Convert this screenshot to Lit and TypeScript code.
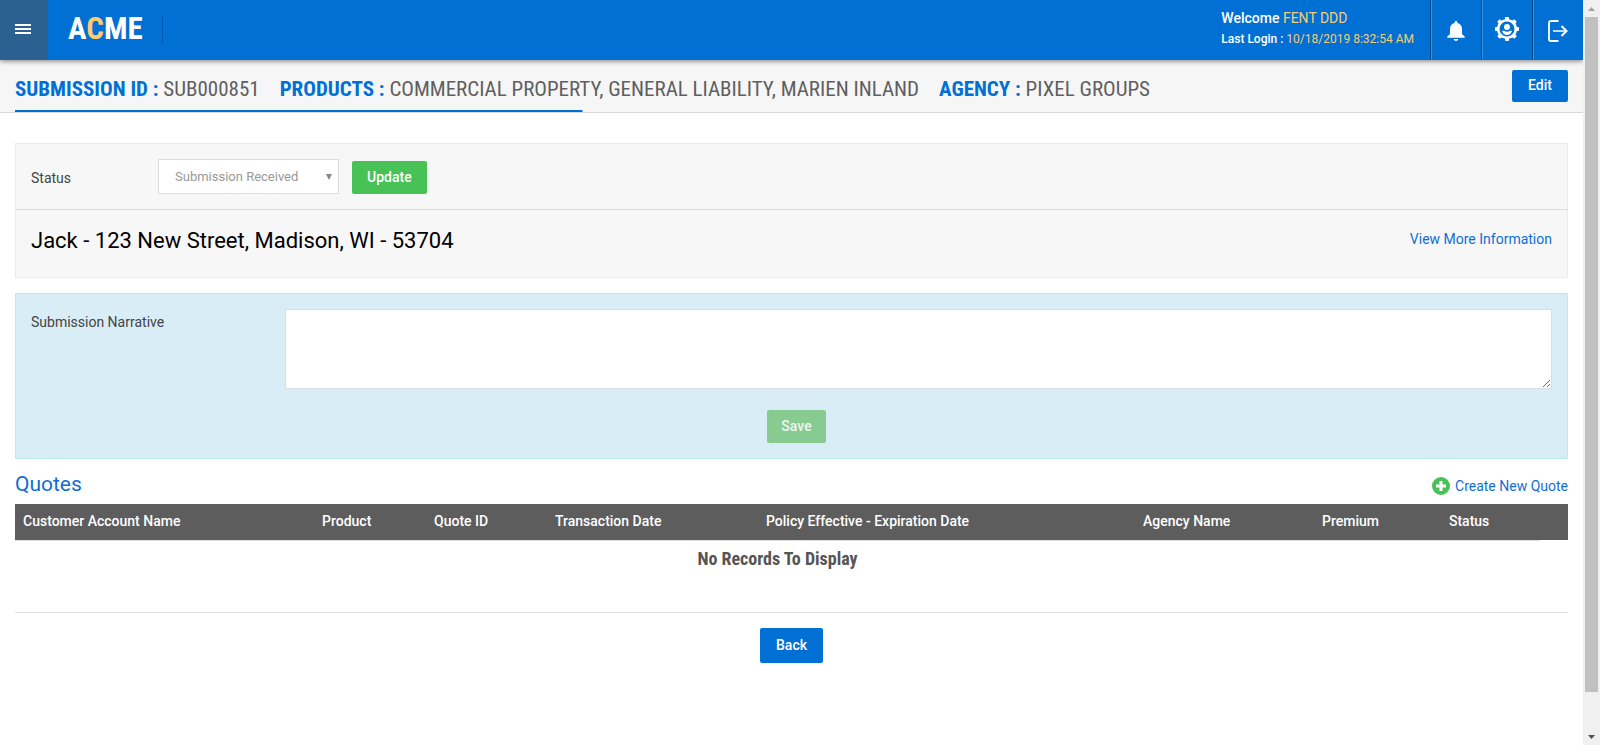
import { LitElement, html, svg, css } from "lit";
import { customElement, property } from "lit/decorators.js";

interface Column {
  label: string;
  share: number;
}

const COLUMNS: Column[] = [
  { label: "Customer Account Name", share: 299 },
  { label: "Product", share: 112 },
  { label: "Quote ID", share: 121 },
  { label: "Transaction Date", share: 211 },
  { label: "Policy Effective - Expiration Date", share: 377 },
  { label: "Agency Name", share: 179 },
  { label: "Premium", share: 127 },
  { label: "Status", share: 99 },
];
const ACTION_SHARE = 28;

const gearTooth = (angle: number) =>
  svg`<path d="M-2.200 -9L-1.800 -12H1.800L2.200 -9z" transform="rotate(${angle})" />`;

@customElement("top-bar")
export class TopBar extends LitElement {
  @property() user = "";
  @property() lastLogin = "";

  static styles = css`
    :host {
      display: block;
      position: relative;
      background: #0070d4;
      color: #fff;
      box-shadow: 0 1px 5px rgba(0, 0, 0, 0.5);
    }
    .bar {
      display: flex;
      height: 60px;
      align-items: flex-start;
    }
    button {
      border: 0;
      padding: 0;
      margin: 0;
      color: inherit;
      background: none;
      display: grid;
      place-items: center;
      cursor: pointer;
    }
    svg {
      display: block;
    }
    .menu {
      width: 48px;
      height: 59px;
      padding: 0 2px 2px 0;
      background: #2a6191;
    }
    .brand {
      font: 700 31px/44px "Roboto Condensed", Roboto, sans-serif;
      color: #fff;
      text-decoration: none;
      margin: 7px 0 0 20px;
      padding: 0 19px 0 0;
    }
    .rule {
      width: 1px;
      height: 28px;
      margin-top: 15px;
      background: #0059a9;
    }
    .accent {
      color: #fdcb6e;
    }
    .who {
      margin-left: auto;
      padding: 8px 16px 0 0;
      font: 500 14px/20px Roboto, sans-serif;
    }
    .login {
      font-size: 12px;
      line-height: 22px;
    }
    .who p {
      margin: 0;
    }
    .who .accent {
      color: #f3cd78;
      font-weight: 400;
    }
    .tool {
      width: 51px;
      height: 59px;
      border-left: 1px solid #0a4780;
      box-shadow: inset 1px 0 #3b8fdc;
      padding-top: 3px;
    }
    .settings {
      padding: 0 0 2px;
    }
  `;

  render() {
    return html`
      <header class="bar">
        <button class="menu" aria-label="Menu">
          <svg width="16" height="10" viewBox="0 0 16 10" fill="#fff">
            <path d="M0 0h16v2H0zM0 4h16v2H0zM0 8h16v2H0z" />
          </svg>
        </button>
        <a class="brand" href="#">A<span class="accent">C</span>ME</a>
        <span class="rule"></span>
        <div class="who">
          <p>Welcome <span class="accent">${this.user}</span></p>
          <p class="login">Last Login : <span class="accent">${this.lastLogin}</span></p>
        </div>
        <button class="tool" aria-label="Notifications">
          <svg width="18" height="20" viewBox="0 0 18 20" fill="#fff">
            <path d="M9 0c.8 0 1.400.6 1.400 1.300v.6C13.200 2.500 15 4.800 15 7.700v5.300l2.600 2.500c.5.6.4 1.200-.4 1.200H.8c-.8 0-.9-.6-.4-1.200L3 13V7.700c0-2.900 1.800-5.200 4.600-5.800v-.6C7.600.6 8.200 0 9 0zM6.600 18h4.800c-.3 1.200-1.200 2-2.400 2s-2.100-.8-2.400-2z" />
          </svg>
        </button>
        <button class="tool settings" aria-label="Account settings">
          <svg width="26" height="26" viewBox="-13 -13 26 26">
            <circle r="8.800" fill="none" stroke="#fff" stroke-width="2.600" />
            <g fill="#fff">
              ${[0, 45, 90, 135, 180, 225, 270, 315].map((a) => gearTooth(a))}
              <circle cy="-2" r="3" />
              <path d="M-5 1.800h2.200C-1.500 3.200 1.500 3.200 2.800 1.800H5C4.400 4.600 2.500 6 0 6s-4.400-1.400-5-4.200z" />
            </g>
          </svg>
        </button>
        <button class="tool" aria-label="Log out">
          <svg width="20" height="22" viewBox="0 0 20 22" fill="none" stroke="#fff" stroke-width="2">
            <path d="M10.500 1H3Q1 1 1 3v16Q1 21 3 21h7.500" stroke-width="1.800" />
            <path d="M5 11h13" stroke-width="1.500" />
            <path d="M13.500 6l5 5-5 5" />
          </svg>
        </button>
      </header>
    `;
  }
}

@customElement("scroll-rail")
export class ScrollRail extends LitElement {
  static styles = css`
    :host {
      display: flex;
      flex-direction: column;
      position: sticky;
      top: 0;
      height: 100vh;
      background: #f0f0f0;
    }
    .arrow {
      height: 17px;
      display: grid;
      place-items: center;
    }
    .track {
      flex: 1;
      padding: 0 2px;
    }
    .thumb {
      height: 95%;
      background: #c0c0c0;
    }
  `;
  render() {
    return html`
      <div class="arrow">
        <svg width="7" height="4" viewBox="0 0 7 4" fill="#a3a3a3"><path d="M0 4L3.500 0L7 4z" /></svg>
      </div>
      <div class="track"><div class="thumb"></div></div>
      <div class="arrow">
        <svg width="7" height="4" viewBox="0 0 7 4" fill="#505050"><path d="M0 0L3.500 4L7 0z" /></svg>
      </div>
    `;
  }
}

@customElement("quote-table")
export class QuoteTable extends LitElement {
  static styles = css`
    :host {
      display: block;
    }
    table {
      width: 100%;
      table-layout: fixed;
      border-collapse: separate;
      border-spacing: 0;
    }
    th {
      height: 36px;
      box-sizing: border-box;
      padding: 0 8px 2px;
      background: #5d5d5d;
      color: #fff;
      font: 500 14px/20px Roboto, sans-serif;
      text-align: left;
      white-space: nowrap;
    }
    .empty {
      border-top: 1px solid #ddd;
      padding: 6px 8px;
      text-align: center;
      color: #555;
      font: 700 18px/24px "Roboto Condensed", Roboto, sans-serif;
    }
  `;
  render() {
    const total = COLUMNS.reduce((sum, c) => sum + c.share, ACTION_SHARE);
    return html`
      <table>
        <colgroup>
          ${COLUMNS.map((c) => html`<col style="width:${(c.share / total) * 100}%" />`)}
          <col />
        </colgroup>
        <thead>
          <tr>
            ${COLUMNS.map((c) => html`<th scope="col">${c.label}</th>`)}
            <th></th>
          </tr>
        </thead>
        <tbody>
          <tr>
            <td class="empty" colspan=${COLUMNS.length}>No Records To Display</td>
          </tr>
        </tbody>
      </table>
    `;
  }
}

@customElement("app-root")
export class AppRoot extends LitElement {
  static styles = css`
    :host {
      display: grid;
      grid-template-columns: minmax(0, 1fr) 17px;
      min-height: 100vh;
      background: #fff;
      color: #444;
      font: 400 14px/20px Roboto, sans-serif;
    }
    .summary {
      display: flex;
      justify-content: space-between;
      align-items: flex-start;
      padding: 10px 15px 0;
      background: #f6f6f6;
      border-bottom: 1px solid #d9d9d9;
    }
    h1 {
      margin: 0;
      min-height: 42px;
      box-sizing: border-box;
      padding-top: 4px;
      display: flex;
      flex-wrap: wrap;
      column-gap: 20px;
      font: 400 21px/30px "Roboto Condensed", Roboto, sans-serif;
      color: #5f5f5f;
      background: linear-gradient(#0070d4, #0070d4) left bottom / 50% 2px no-repeat;
    }
    h1 b {
      color: #0070d4;
    }
    .btn {
      box-sizing: border-box;
      height: 33px;
      padding: 0 15px 1px;
      border: 0;
      border-radius: 2px;
      background: #0070d4;
      color: #fff;
      font: 500 14px/20px Roboto, sans-serif;
      cursor: pointer;
    }
    .edit {
      height: 32px;
      padding: 0 16px 2px;
    }
    .back {
      height: 35px;
      padding: 0 16px 1px;
    }
    .go {
      background: #48c156;
    }
    .go:disabled {
      background: #87cb91;
      color: #eef7f2;
      padding: 0 14px 1px;
      cursor: default;
    }
    main {
      padding: 30px 15px;
    }
    .card {
      background: #f7f7f7;
      border: 1px solid #ebebeb;
      margin-bottom: 15px;
    }
    .status {
      display: flex;
      align-items: center;
      padding: 15px;
      height: 35px;
      border-bottom: 1px solid #ddd;
    }
    .status label {
      width: 127px;
      padding-top: 3px;
    }
    .picker {
      width: 181px;
      height: 35px;
      box-sizing: border-box;
      appearance: none;
      border: 1px solid #ddd;
      border-radius: 0;
      padding: 0 16px;
      margin-right: 13px;
      color: #999;
      font: 400 13px/20px Roboto, sans-serif;
      background: #fff url("data:image/svg+xml,%3Csvg xmlns='http://www.w3.org/2000/svg' width='6' height='6'%3E%3Cpath d='M0 0h6L3 6z' fill='%23888'/%3E%3C/svg%3E") no-repeat right 6px center;
    }
    .status .btn {
      margin-top: 2px;
    }
    .insured {
      display: flex;
      justify-content: space-between;
      align-items: flex-start;
      padding: 15px 15px 21px;
    }
    h2 {
      margin: 0;
      font: 400 22px/31px Roboto, sans-serif;
      color: #000;
    }
    a {
      color: #0f6fd1;
      text-decoration: none;
    }
    .insured a {
      padding-top: 4px;
    }
    .note {
      background: #d9edf7;
      border-color: #bce8f1;
      display: grid;
      grid-template-columns: 254px minmax(0, 1fr);
      padding: 15px;
      row-gap: 21px;
      margin-bottom: 10px;
    }
    .note label {
      padding-top: 3px;
    }
    textarea {
      display: block;
      box-sizing: border-box;
      width: 100%;
      height: 80px;
      border: 1px solid #ddd;
      border-radius: 0;
      background: #fff;
      font: inherit;
      resize: vertical;
    }
    .actions {
      grid-column: 1 / -1;
      display: flex;
      justify-content: center;
      padding-left: 10px;
    }
    .quotes {
      display: flex;
      justify-content: space-between;
      align-items: flex-start;
      height: 35px;
    }
    .quotes h2 {
      font-size: 21px;
      color: #0f6fd1;
    }
    .create {
      display: flex;
      align-items: center;
      gap: 5px;
      padding-top: 7px;
    }
    .footer {
      display: flex;
      justify-content: center;
      margin-top: 35px;
      padding-top: 15px;
      border-top: 1px solid #ddd;
    }
  `;

  render() {
    return html`
      <div>
        <top-bar user="FENT DDD" lastLogin="10/18/2019 8:32:54 AM"></top-bar>
        <section class="summary">
          <h1>
            <span><b>SUBMISSION ID :</b> SUB000851</span>
            <span><b>PRODUCTS :</b> COMMERCIAL PROPERTY, GENERAL LIABILITY, MARIEN INLAND</span>
            <span><b>AGENCY :</b> PIXEL GROUPS</span>
          </h1>
          <button class="btn edit">Edit</button>
        </section>
        <main>
          <section class="card">
            <div class="status">
              <label for="status">Status</label>
              <select id="status" class="picker">
                <option>Submission Received</option>
              </select>
              <button class="btn go">Update</button>
            </div>
            <div class="insured">
              <h2>Jack - 123 New Street, Madison, WI - 53704</h2>
              <a href="#">View More Information</a>
            </div>
          </section>
          <section class="card note">
            <label for="narrative">Submission Narrative</label>
            <textarea id="narrative"></textarea>
            <div class="actions"><button class="btn go" disabled>Save</button></div>
          </section>
          <div class="quotes">
            <h2>Quotes</h2>
            <a class="create" href="#">
              <svg width="18" height="18" viewBox="0 0 18 18">
                <circle cx="9" cy="9" r="9" fill="#48c156" />
                <path d="M9 4v10M4 9h10" stroke="#fff" stroke-width="3" />
              </svg>
              Create New Quote
            </a>
          </div>
          <quote-table></quote-table>
          <div class="footer"><button class="btn back">Back</button></div>
        </main>
      </div>
      <scroll-rail></scroll-rail>
    `;
  }
}
